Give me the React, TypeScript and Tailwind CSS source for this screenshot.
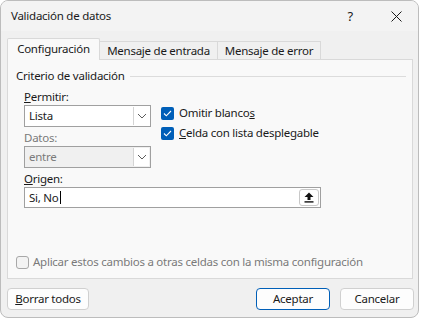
import type { ReactNode } from "react";

function Chevron() {
  return (
    <svg width="10" height="6" viewBox="0 0 10 6" fill="none">
      <path d="M1 1l4 4 4-4" stroke="#5c5c5c" strokeWidth="1" />
    </svg>
  );
}

function Check() {
  return (
    <svg width="9" height="7" viewBox="0 0 9 7" fill="none">
      <path d="M1 3.5l2.3 2.3L8 1" stroke="#ffffff" strokeWidth="1.1" />
    </svg>
  );
}

function Select({ value, disabled }: { value: string; disabled?: boolean }) {
  return (
    <div
      className={`flex h-[22px] w-[127px] border border-[#a0a0a0] ${
        disabled ? "bg-[#f0f0f0] text-[#7a7a7a]" : "bg-white text-[#1a1a1a]"
      }`}
    >
      <div className="flex flex-1 items-center pl-[4px]">{value}</div>
      <div className="my-px mr-px flex w-[16px] items-center justify-center border-l border-[#d4d4d4] bg-white">
        <Chevron />
      </div>
    </div>
  );
}

function CheckRow({ children }: { children: ReactNode }) {
  return (
    <div className="flex h-[20px] items-center gap-[5px]">
      <div className="flex h-[13px] w-[13px] items-center justify-center rounded-[2px] bg-[#005fb8]">
        <Check />
      </div>
      <span>{children}</span>
    </div>
  );
}

function Button({ children, primary, className }: { children: ReactNode; primary?: boolean; className?: string }) {
  return (
    <button
      className={`flex h-[22px] items-center justify-center rounded-[4px] border bg-[#fdfdfd] text-[#1a1a1a] ${
        primary ? "border-[#005fb8]" : "border-[#d0d0d0]"
      } ${className ?? ""}`}
    >
      {children}
    </button>
  );
}

export default function App() {
  return (
    <div
      className="relative h-[319px] w-[422px] overflow-hidden bg-white text-[11.5px] leading-[16px] tracking-[-0.25px] text-[#1a1a1a]"
      style={{ fontFamily: '"Noto Sans", "Open Sans", sans-serif' }}
    >
      <div className="flex h-[318px] w-[419px] flex-col overflow-hidden rounded-[8px] border border-[#bcbcbc] bg-[#f0f0f0]">
        {/* barra de título */}
        <div className="flex h-[30px] shrink-0 items-center bg-[#f3f3f3] pl-[10px]">
          <span className="flex-1 text-[11.5px]">Validación de datos</span>
          <span className="mr-[38px] text-[13px]">?</span>
          <svg className="mr-[16px]" width="11" height="11" viewBox="0 0 11 11" fill="none">
            <path d="M0.5 0.5l10 10M10.5 0.5l-10 10" stroke="#1a1a1a" strokeWidth="1" />
          </svg>
        </div>

        <div className="flex flex-1 flex-col px-[6px] pt-[7px]">
          {/* pestañas */}
          <div className="flex h-[22px] items-end">
            <div className="relative z-10 flex h-[22px] w-[93px] items-center justify-center rounded-t-[2px] border border-b-0 border-[#d9d9d9] bg-[#f9f9f9] pb-[1px]">
              Configuración
            </div>
            <div className="flex h-[19px] w-[118px] items-center justify-center border border-l-0 border-b-0 border-[#d9d9d9] bg-[#f0f0f0]">
              Mensaje de entrada
            </div>
            <div className="flex h-[19px] w-[103px] items-center justify-center border border-l-0 border-b-0 border-[#d9d9d9] bg-[#f0f0f0]">
              Mensaje de error
            </div>
          </div>

          {/* panel */}
          <div className="-mt-px flex h-[220px] w-[406px] flex-col border border-[#d9d9d9] bg-[#f9f9f9] pl-[8px] pt-[8px]">
            <div className="flex items-center gap-[5px] pr-[6px]">
              <span>Criterio de validación</span>
              <div className="h-px flex-1 bg-[#dcdcdc]" />
            </div>

            <div className="mt-[5px] flex pl-[8px]">
              <div className="flex w-[127px] flex-col">
                <span>
                  <u>P</u>ermitir:
                </span>
                <Select value="Lista" />
                <span className="mt-[3px] text-[#7a7a7a]">Datos:</span>
                <Select value="entre" disabled />
              </div>
              <div className="ml-[10px] flex flex-col pt-[14px]">
                <CheckRow>
                  Omitir blanco<u>s</u>
                </CheckRow>
                <CheckRow>
                  <u>C</u>elda con lista desplegable
                </CheckRow>
              </div>
            </div>

            <div className="mt-[3px] pl-[8px]">
              <span>
                <u>O</u>rigen:
              </span>
              <div className="flex h-[21px] w-[297px] items-center border border-[#a0a0a0] bg-white pl-[4px]">
                <span className="flex-1">
                  Si, No<span className="ml-px inline-block h-[13px] w-px translate-y-[2px] bg-black" />
                </span>
                <div className="mr-px flex h-[17px] w-[20px] items-center justify-center rounded-[3px] border border-[#c8c8c8] bg-white">
                  <svg width="10" height="11" viewBox="0 0 10 11" fill="#111111">
                    <path d="M5 0.5L9.5 5H6.5V8H3.5V5H0.5Z" />
                    <rect x="0.5" y="9.2" width="9" height="1.4" />
                  </svg>
                </div>
              </div>
            </div>

            <div className="mt-auto mb-[8px] flex items-center gap-[4px] text-[#7a7a7a]">
              <div className="h-[13px] w-[13px] rounded-[3px] border border-[#a8a8a8] bg-[#f3f3f3]" />
              <span>Aplicar estos cambios a otras celdas con la misma configuración</span>
            </div>
          </div>

          {/* botones */}
          <div className="-mr-[2px] mt-[9px] flex items-center">
            <Button className="w-[82px]">
              <span>
                <u>B</u>orrar todos
              </span>
            </Button>
            <Button primary className="ml-auto w-[74px]">
              Aceptar
            </Button>
            <Button className="ml-[10px] w-[74px]">Cancelar</Button>
          </div>
        </div>
      </div>
    </div>
  );
}
